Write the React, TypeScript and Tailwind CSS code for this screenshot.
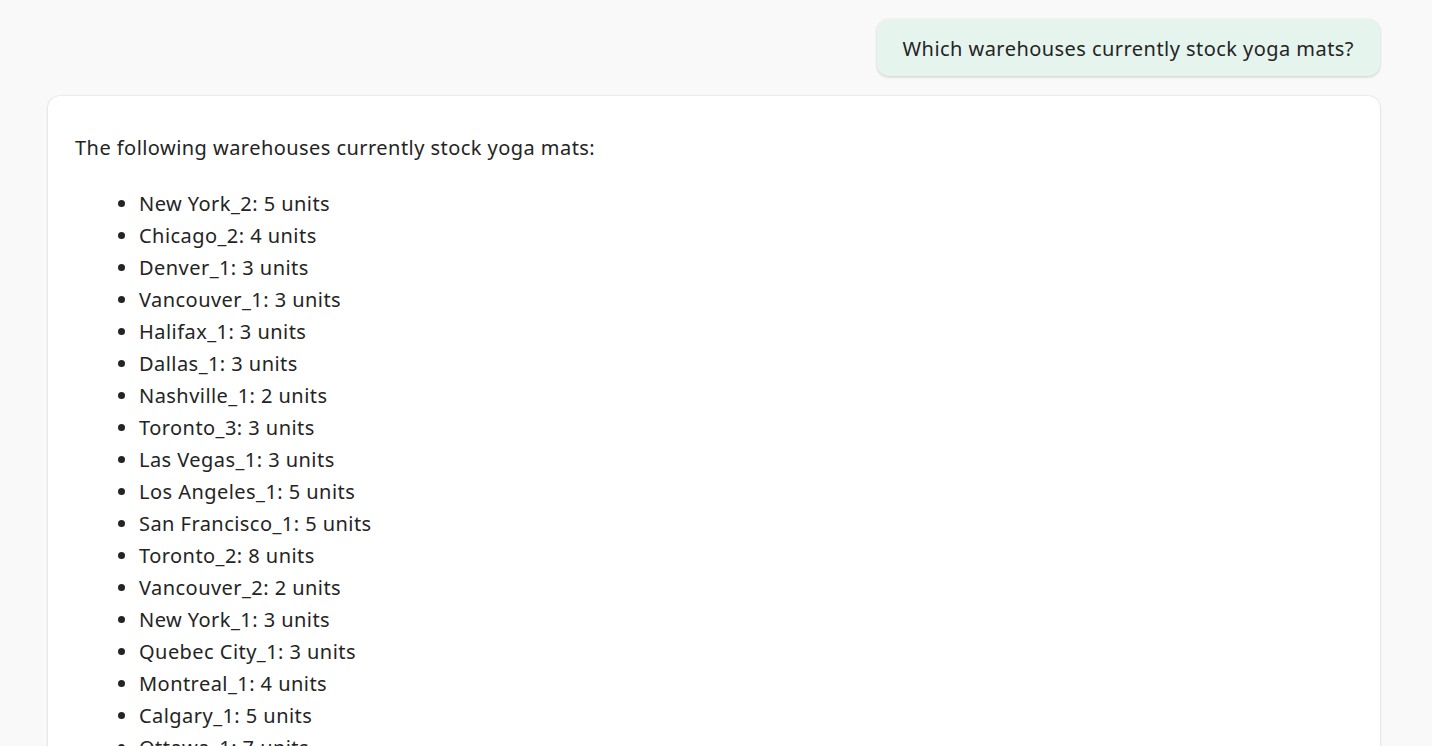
import React from "react";

const items = [
  "New York_2: 5 units",
  "Chicago_2: 4 units",
  "Denver_1: 3 units",
  "Vancouver_1: 3 units",
  "Halifax_1: 3 units",
  "Dallas_1: 3 units",
  "Nashville_1: 2 units",
  "Toronto_3: 3 units",
  "Las Vegas_1: 3 units",
  "Los Angeles_1: 5 units",
  "San Francisco_1: 5 units",
  "Toronto_2: 8 units",
  "Vancouver_2: 2 units",
  "New York_1: 3 units",
  "Quebec City_1: 3 units",
  "Montreal_1: 4 units",
  "Calgary_1: 5 units",
  "Ottawa_1: 7 units",
  "Seattle_1: 4 units",
];

export default function App() {
  return (
    <div
      className="h-[746px] w-full overflow-hidden bg-[#f9f9f9] text-[#242424] tracking-[0.45px]"
      style={{ fontFamily: '"Noto Sans", "Open Sans", sans-serif' }}
    >
      <div className="flex flex-col px-[48px] pt-[19px]">
        <div className="flex justify-end pr-[4px]">
          <div className="rounded-[12px] bg-[#e6f4ee] px-[26px] pt-[16px] pb-[13px] text-[20px] leading-[28px] shadow-[0_1px_3px_rgba(0,0,0,0.18)]">
            Which warehouses currently stock yoga mats?
          </div>
        </div>
        <div className="mt-[20px] mr-[4px] rounded-[12px] bg-white px-[27px] pt-[36px] pb-[24px] shadow-[0_0_2px_rgba(0,0,0,0.14),0_1px_3px_rgba(0,0,0,0.1)]">
          <p className="text-[20px] leading-[32px]">
            The following warehouses currently stock yoga mats:
          </p>
          <ul className="mt-[24px] list-disc pl-[64px] text-[20px] leading-[32px]">
            {items.map((t) => (
              <li key={t}>{t}</li>
            ))}
          </ul>
        </div>
      </div>
    </div>
  );
}
